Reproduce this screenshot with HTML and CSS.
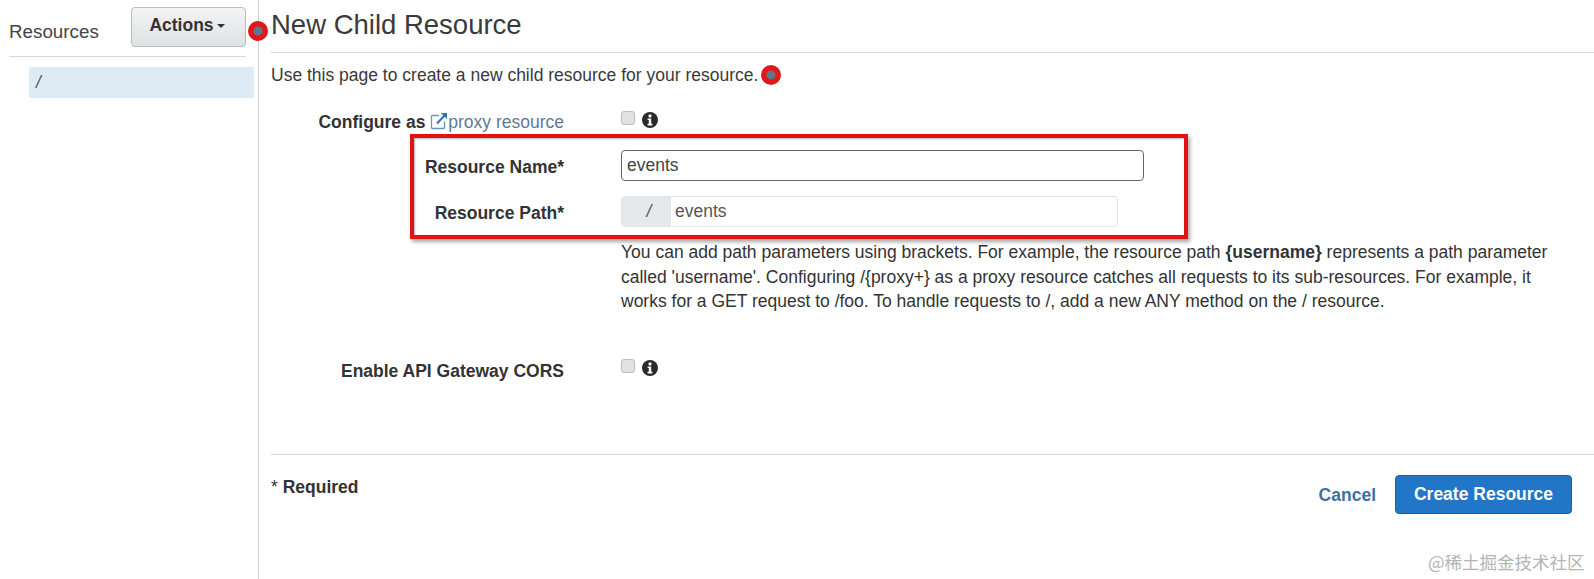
FILE: index.html
```html
<!DOCTYPE html>
<html lang="en">
<head>
<meta charset="utf-8">
<title>New Child Resource</title>
<link rel="stylesheet" href="styles.css">
</head>
<body>
<div class="page">
  <aside class="sidebar">
    <div class="side-head">
      <span class="side-title">Resources</span>
      <button class="actions">Actions<span class="caret"></span></button>
    </div>
    <div class="tree-row">/</div>
  </aside>
  <main class="main">
    <h1 class="title">New Child Resource</h1>
    <p class="intro">Use this page to create a new child resource for your resource.</p>
    <div class="row row-proxy">
      <div class="label">Configure as <svg class="ext" viewBox="0 0 18 18" width="18" height="18"><path d="M9 3.5H2.5a1 1 0 0 0-1 1v11a1 1 0 0 0 1 1h11a1 1 0 0 0 1-1V9.5" fill="none" stroke="#6f93b5" stroke-width="1.3"/><path d="M7 11.5 14.5 3.5" stroke="#2f6fb0" stroke-width="2" fill="none"/><path d="M11 1h6v6z" fill="#2f6fb0"/></svg><span class="link">proxy resource</span></div>
      <div class="control check-line">
        <span class="check"></span>
        <svg class="info" viewBox="0 0 16 16" width="16" height="16"><circle cx="8" cy="8" r="8" fill="#2b2b2b"/><circle cx="8" cy="3.9" r="1.6" fill="#fff"/><path d="M5.6 6.5h3.6v5.3h1.2v1.6H5.6v-1.6h1.2V8.1H5.6z" fill="#fff"/></svg>
      </div>
    </div>
    <div class="row row-name">
      <div class="label">Resource Name*</div>
      <div class="control"><div class="input">events</div></div>
    </div>
    <div class="row row-path">
      <div class="label">Resource Path*</div>
      <div class="control"><div class="path"><span class="addon">/</span><span class="path-val">events</span></div></div>
    </div>
    <div class="row row-help">
      <div class="label"></div>
      <p class="help">You can add path parameters using brackets. For example, the resource path <b>{username}</b> represents a path parameter called 'username'. Configuring /{proxy+} as a proxy resource catches all requests to its sub-resources. For example, it works for a GET request to /foo. To handle requests to /, add a new ANY method on the / resource.</p>
    </div>
    <div class="row row-cors">
      <div class="label">Enable API Gateway CORS</div>
      <div class="control check-line">
        <span class="check"></span>
        <svg class="info" viewBox="0 0 16 16" width="16" height="16"><circle cx="8" cy="8" r="8" fill="#2b2b2b"/><circle cx="8" cy="3.9" r="1.6" fill="#fff"/><path d="M5.6 6.5h3.6v5.3h1.2v1.6H5.6v-1.6h1.2V8.1H5.6z" fill="#fff"/></svg>
      </div>
    </div>
    <div class="footer">
      <span class="required"><span class="star">*</span> Required</span>
      <div class="buttons">
        <span class="cancel">Cancel</span>
        <button class="create">Create Resource</button>
      </div>
    </div>
  </main>
</div>
<div class="redbox"></div>
<span class="dot dot-a"></span>
<span class="dot dot-b"></span>
<div class="watermark">@稀土掘金技术社区</div>
</body>
</html>
```

FILE: styles.css
```css
* { box-sizing: border-box; }
html, body { margin: 0; height: 100%; }
body {
  background: #fff;
  color: #333;
  font-family: "Liberation Sans", Arial, sans-serif;
  font-size: 17.5px;
  overflow: hidden;
  position: relative;
}
.page { display: flex; height: 579px; }
.sidebar {
  width: 259px;
  flex: none;
  border-right: 1px solid #cfcfcf;
  padding-left: 9px;
  padding-right: 4px;
}
.side-head {
  width: 237px;
  height: 57px;
  padding-top: 7px;
  border-bottom: 1px solid #d8d8d8;
  display: flex;
  justify-content: space-between;
  align-items: flex-start;
}
.side-title { font-size: 18.8px; color: #444; margin-top: 14px; }
.actions {
  width: 115px;
  height: 40px;
  border: 1px solid #b9bcc0;
  border-radius: 4px;
  background: linear-gradient(#f3f4f5, #dfe1e3);
  color: #333;
  font: bold 17.5px "Liberation Sans", Arial, sans-serif;
  padding: 0 3px 4px 0;
}
.caret {
  display: inline-block;
  margin-left: 3px;
  vertical-align: 3px;
  border: 4px solid transparent;
  border-top-color: #333;
  border-bottom: 0;
}
.tree-row {
  margin: 10px 0 0 20px;
  height: 31px;
  width: 225px;
  background: #deebf4;
  color: #555;
  font-style: italic;
  font-size: 17.5px;
  line-height: 30px;
  padding-left: 7px;
}
.main { flex: 1; padding: 0 0 0 12px; min-width: 0; }
.title {
  margin: 0;
  height: 53px;
  border-bottom: 1px solid #d5d5d5;
  font-size: 27.5px;
  font-weight: normal;
  line-height: 50px;
  color: #3a3a3a;
}
.intro { margin: 13px 0 0; line-height: 19px; font-size: 17.5px; color: #3a3a3a; height: 19px; }
.row { display: flex; }
.label {
  width: 293px;
  flex: none;
  text-align: right;
  font-weight: bold;
  font-size: 17.5px;
  color: #333;
  line-height: 20px;
}
.control { margin-left: 57px; flex: none; }
.row-proxy { margin-top: 27px; height: 20px; }
.row-proxy .label { display: flex; justify-content: flex-end; align-items: center; white-space: pre; }
.ext { margin: -3px 0 0 0; flex: none; }
.link { font-weight: normal; color: #5d7b98; }
.check-line { display: flex; align-items: center; height: 17px; margin-top: -5px; padding-top: 4px; }
.check {
  width: 14px;
  height: 14px;
  border: 1px solid #bdbdbd;
  border-radius: 3px;
  background: #e2e2e2;
  margin-right: 7px;
}
.info { flex: none; margin-top: 4px; }
.row-name { margin-top: 18px; height: 31px; align-items: center; }
.row-name .label, .row-path .label { padding-top: 2px; }
.input {
  width: 523px;
  height: 31px;
  border: 1px solid #666;
  border-radius: 4px;
  padding-left: 5px;
  line-height: 28px;
  font-size: 17.5px;
  color: #444;
}
.row-path { margin-top: 15px; height: 31px; align-items: center; }
.path {
  width: 497px;
  height: 31px;
  border: 1px solid #e2e4e6;
  border-radius: 4px;
  display: flex;
  font-size: 17.5px;
  color: #555;
  line-height: 29px;
}
.addon {
  width: 49px;
  background: #e6e9ec;
  border-right: 1px solid #e2e4e6;
  text-align: center;
  padding-left: 6px;
  font-style: italic;
}
.path-val { padding-left: 4px; }
.row-help { margin-top: 13px; }
.help { margin: 0 0 0 57px; width: 930px; font-size: 17.5px; line-height: 24.5px; color: #333; flex: none; }
.row-cors { margin-top: 47px; height: 20px; }
.footer {
  margin-top: 73px;
  padding-right: 22px;
  border-top: 1px solid #d5d5d5;
  display: flex;
  justify-content: space-between;
  align-items: flex-start;
  height: 90px;
}
.required { font-weight: bold; font-size: 17.5px; margin-top: 22px; }
.star { font-weight: normal; }
.buttons { display: flex; align-items: center; margin-top: 20px; gap: 19px; }
.cancel { color: #3f6fa3; font-weight: bold; font-size: 17.5px; padding-top: 2px; }
.create {
  width: 177px;
  height: 39px;
  border: 1px solid #1f5f9f;
  border-radius: 4px;
  background: #2276c8;
  color: #fff;
  font: bold 17.5px "Liberation Sans", Arial, sans-serif;
  padding: 1px 0 0;
}
.redbox {
  position: absolute;
  left: 410px;
  top: 134px;
  width: 778px;
  height: 105px;
  border: 4px solid #e01212;
  box-shadow: 2px 3px 4px rgba(0,0,0,.35), inset 1px 1px 2px rgba(0,0,0,.3);
}
.dot {
  position: absolute;
  width: 20px;
  height: 20px;
  border-radius: 50%;
  background: radial-gradient(circle, #5f7690 0 4px, #e01818 5px);
}
.dot-a { left: 248px; top: 21px; }
.dot-b { left: 761px; top: 65px; }
.watermark {
  position: absolute;
  left: 1428px;
  top: 551px;
  font-family: "Noto Sans CJK SC", sans-serif;
  font-size: 17.5px;
  line-height: 22px;
  color: #b4b4b4;
  white-space: nowrap;
}
```
